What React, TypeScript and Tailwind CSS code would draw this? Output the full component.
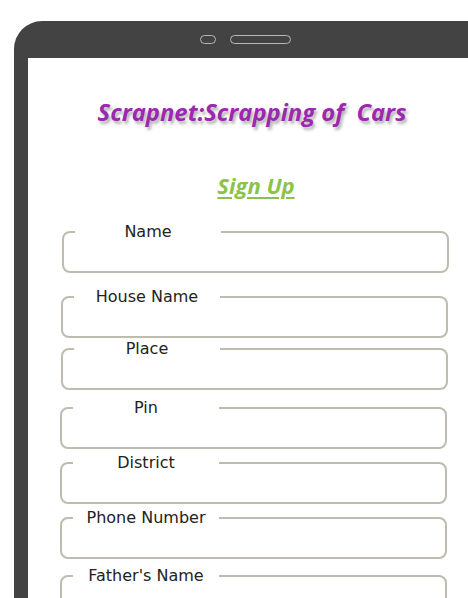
const fields = [
  { label: "Name", mt: "mt-[23px]", ml: "ml-[34px]" },
  { label: "House Name", mt: "mt-[14px]", ml: "ml-[33px]" },
  { label: "Place", mt: "mt-[1px]", ml: "ml-[33px]" },
  { label: "Pin", mt: "mt-[8px]", ml: "ml-[32px]" },
  { label: "District", mt: "mt-[4px]", ml: "ml-[32px]" },
  { label: "Phone Number", mt: "mt-[4px]", ml: "ml-[32px]" },
  { label: "Father's Name", mt: "mt-[7px]", ml: "ml-[32px]" },
]

function Field({ label, mt, ml }: { label: string; mt: string; ml: string }) {
  return (
    <fieldset
      className={`${mt} ${ml} w-[387px] rounded-[8px] border-2 border-[#bdbcae] pl-[11px] pr-0 pb-0`}
    >
      <legend className="p-0 text-left">
        <span className="block w-[146px] text-center text-[16px] leading-[20px] text-[#222] [font-family:'DejaVu_Sans',sans-serif]">
          {label}
        </span>
      </legend>
      <div className="h-[29px]" />
    </fieldset>
  )
}

export default function App() {
  return (
    <div className="h-[598px] w-[468px] overflow-hidden bg-white">
      <div className="ml-[14px] mt-[21px] flex w-[462px] flex-col rounded-tl-[28px] bg-[#434343] pl-[14px]">
        {/* Camera + speaker */}
        <div className="flex h-[37px] items-center justify-center gap-[14px] pr-[14px]">
          <div className="h-[9px] w-[16px] rounded-full border border-[#b8b8b8]" />
          <div className="h-[9px] w-[61px] rounded-full border border-[#b8b8b8]" />
        </div>

        {/* Screen */}
        <div className="flex h-[600px] flex-col bg-white">
          <h1 className="mt-[39px] h-[30px] whitespace-pre text-center text-[23.8px] font-bold italic leading-[30px] text-[#9c27b0] [font-family:'Open_Sans',sans-serif] [text-shadow:2px_3px_3px_rgba(0,0,0,0.3)]">
            {"Scrapnet:Scrapping of  Cars"}
          </h1>
          <p className="ml-[8px] mt-[44px] h-[28px] text-center text-[22px] font-bold italic leading-[28px] text-[#8bc34a] underline decoration-2 underline-offset-[3px] [font-family:'Open_Sans',sans-serif]">
            Sign Up
          </p>

          {fields.map((f) => (
            <Field key={f.label} {...f} />
          ))}
        </div>
      </div>
    </div>
  )
}
